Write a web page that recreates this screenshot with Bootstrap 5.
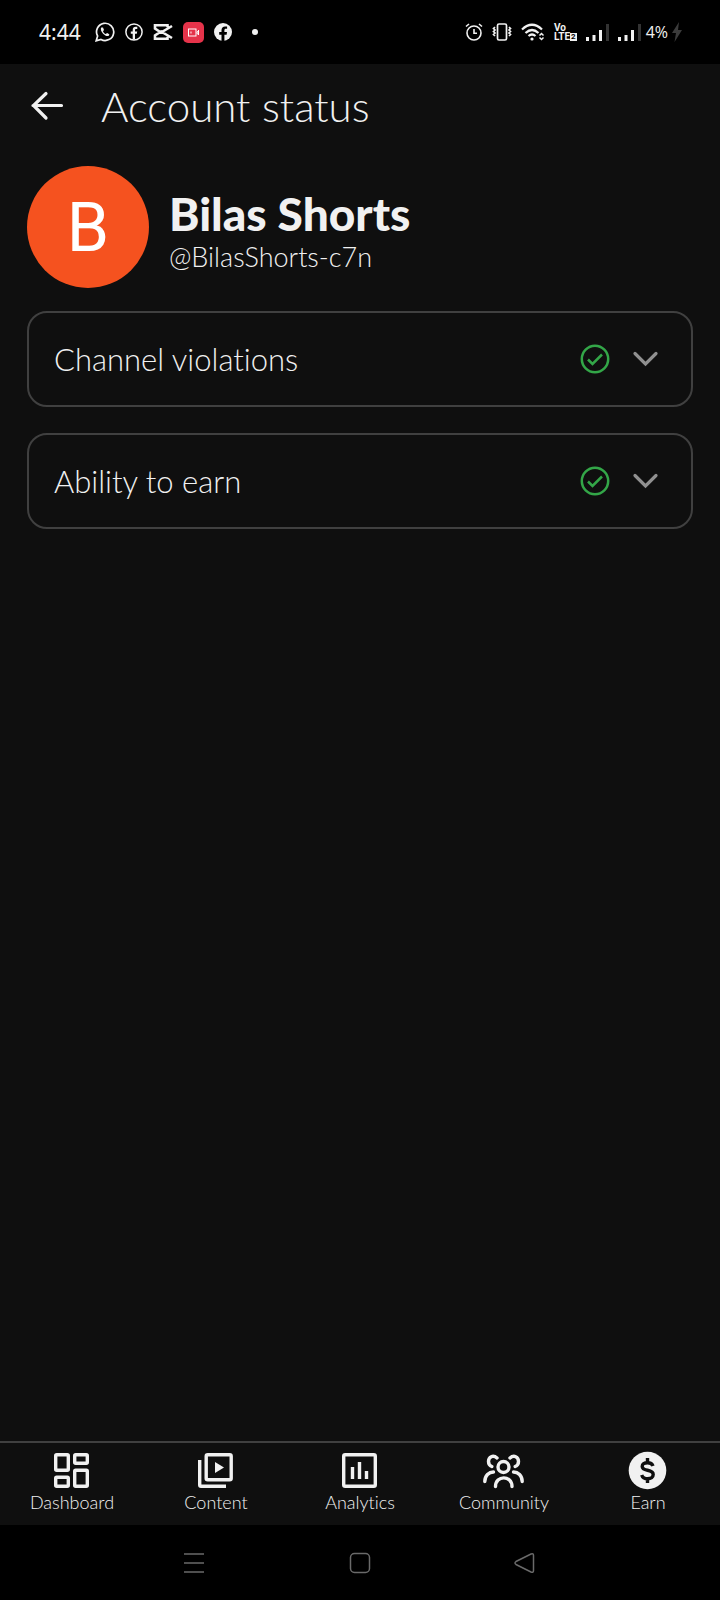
<!DOCTYPE html>
<html lang="en" data-bs-theme="dark">
<head>
<meta charset="utf-8">
<meta name="viewport" content="width=device-width, initial-scale=1">
<title>Account status</title>
<link href="https://cdn.jsdelivr.net/npm/bootstrap@5.3.0/dist/css/bootstrap.min.css" rel="stylesheet">
<style>
  body { background: #0f0f0f; color: #f1f1f1; font-family: Lato, "Open Sans", sans-serif; font-weight: 300; }
  body, button { font-variant-ligatures: none; }
  h1, h2 { color: #f1f1f1; }
  svg { display: block; flex-shrink: 0; }
  .status-bar { height: 64px; padding: 0 38px 0 39px; background: #000; color: #f1f1f1; }
  .status-left { gap: 10px; }
  .status-right { gap: 9px; }
  .clock { font: 400 21px/24px "Noto Sans", sans-serif; margin-right: 4px; }
  .power { gap: 4px; margin-left: -4px; }
  .battery { font: 400 16px/20px "Open Sans", sans-serif; }
  .volte { font: 700 10px/9px Roboto, sans-serif; }
  .sim { background: #f1f1f1; color: #000; font-size: 8px; line-height: 8px; padding: 0 1px; }
  .top-bar { height: 84px; padding: 0 26px; gap: 32px; }
  .top-bar h1 { font-size: 42px; line-height: 48px; font-weight: 300; }
  .avatar { width: 122px; height: 122px; background: #f5521f; color: #fff; font: 400 68px/124px Roboto, sans-serif; }
  .profile { padding: 18px 27px 23px; gap: 20px; }
  .profile-text { padding-top: 11px; }
  .profile h2 { font-size: 46px; line-height: 48px; font-weight: 900; }
  .handle { font-size: 27px; line-height: 38px; }
  .status-list { padding: 0 27px; gap: 26px; }
  .status-row { height: 96px; border: 2px solid #404040; border-radius: 20px; padding: 0 31px 0 25px; gap: 20px; color: #f1f1f1; font-size: 31px; font-weight: 300; }
  .tab-bar { border-top: 2px solid #404040; height: 84px; background: #0f0f0f; }
  .tab-bar a { color: #f1f1f1; font-size: 18px; line-height: 20px; padding-top: 7px; }
  .system-bar { height: 75px; background: #000; gap: 133px; }
  .system-bar button { padding: 5px; color: #6a6a6a; }
</style>
</head>
<body class="d-flex flex-column min-vh-100">
<div class="status-bar d-flex align-items-center justify-content-between">
  <div class="status-left d-flex align-items-center">
    <span class="clock">4:44</span>
    <svg width="20" height="20" viewBox="0 0 20 20"><path d="M1.200 18.800L2.600 14A8.600 8.600 0 1 1 6 17.400z" fill="none" stroke="#f1f1f1" stroke-width="1.700"/><path d="M6.300 5.500c-1.400 2 .8 6 4 7.900 2 1.200 4 .7 4-1.200l-2.200-1.200-1.300 1.100c-1.200-.5-2.300-1.700-2.800-2.900l1-1.200-1-2.400z" fill="#f1f1f1"/></svg>
    <svg width="18" height="18" viewBox="0 0 18 18"><circle cx="9" cy="9" r="8.100" fill="none" stroke="#f1f1f1" stroke-width="1.500"/><path d="M7.700 16.500v-5.700H5.800V8.400h1.900V7c0-2.200 1.200-3.300 3-3.300l1.600.1v2.100h-1.100c-.9 0-1.200.5-1.200 1.200v1.300h2.200l-.4 2.400H10v5.700z" fill="#f1f1f1"/></svg>
    <svg width="20" height="18" viewBox="0 0 20 18" fill="none" stroke="#f1f1f1" stroke-width="2.600"><path d="M19 3L8 9.500 2 5.500V2.300h12.500v2M19 15L8 8.500 2 12.500v3.200h12.500v-2"/></svg>
    <svg width="21" height="21" viewBox="0 0 21 21"><rect width="21" height="21" rx="5" fill="#e5334a"/><g fill="none" stroke="#fff"><rect x="5.500" y="7" width="7.500" height="7"/><path d="M8 9.500v2M15.500 8v5M15.500 9l-1.500 1v1.500l1.500 1"/></g></svg>
    <svg width="18" height="18" viewBox="0 0 18 18"><circle cx="9" cy="9" r="9" fill="#f1f1f1"/><path d="M7.500 18v-6.300H5.200V9h2.300V7.200c0-2.500 1.400-3.800 3.600-3.800l2 .2v2.200H12c-1.200 0-1.600.7-1.600 1.500V9h2.600l-.4 2.700h-2.200V18z" fill="#000"/></svg>
    <svg class="ms-2" width="10" height="10" viewBox="0 0 10 10"><circle cx="5" cy="5" r="3" fill="#f1f1f1"/></svg>
  </div>
  <div class="status-right d-flex align-items-center">
    <svg width="18" height="18" viewBox="0 0 18 18" fill="none" stroke="#f1f1f1" stroke-width="1.600"><circle cx="9" cy="10" r="7"/><path d="M9 6v4.300h3M1 3.500L4 1M17 3.500L14 1"/></svg>
    <svg width="20" height="18" viewBox="0 0 20 18" fill="none" stroke="#f1f1f1" stroke-width="1.700"><rect x="5.500" y="1" width="9" height="16" rx="1.500"/><path d="M3 4L1.500 5.500 3 7 1.500 8.500 3 10 1.500 11.500 3 13M17 4l1.500 1.500L17 7l1.500 1.500L17 10l1.500 1.500L17 13"/></svg>
    <svg width="24" height="18" viewBox="0 0 24 18" fill="none" stroke="#f1f1f1" stroke-width="2.200"><path d="M1 6.500q10-9.500 20 0M4.500 10q6.500-6 13 0M7.500 13q3.500-3 7 0"/><circle cx="11" cy="16" r="1.600" fill="#f1f1f1" stroke="none"/><path d="M18.500 12.500l2-2 2 2M18.500 14.500l2 2 2-2" stroke-width="1.500"/></svg>
    <div class="volte"><div>Vo</div><div class="d-flex align-items-center">LTE<span class="sim">2</span></div></div>
    <svg width="23" height="18" viewBox="0 0 23 18"><path d="M0 14h3v4H0zM6.500 12h3v6h-3zM13 7h3v11h-3z" fill="#f1f1f1"/><path d="M20 1h3v17h-3z" fill="#333"/></svg>
    <svg width="23" height="18" viewBox="0 0 23 18"><path d="M0 14h3v4H0zM6.500 12h3v6h-3zM13 7h3v11h-3z" fill="#f1f1f1"/><path d="M20 1h3v17h-3z" fill="#333"/></svg>
    <div class="power d-flex align-items-center"><span class="battery">4%</span>
    <svg width="10" height="20" viewBox="0 0 10 20"><path d="M7 0L0 11h4L2.500 20 10 8H6z" fill="#3c3c3c"/></svg></div>
  </div>
</div>

<header class="top-bar d-flex align-items-center">
  <button class="btn border-0 p-0" aria-label="Back">
    <svg width="43" height="43" viewBox="0 0 43 43" fill="none" stroke="#f1f1f1" stroke-width="3.200" stroke-linecap="round"><path d="M35.500 20.500H7M20 8.500L7.500 20.500 20 33"/></svg>
  </button>
  <h1 class="m-0">Account status</h1>
</header>

<main class="flex-grow-1">
  <section class="profile d-flex align-items-center">
    <div class="avatar rounded-circle text-center flex-shrink-0">B</div>
    <div class="profile-text">
      <h2 class="m-0">Bilas Shorts</h2>
      <div class="handle">@BilasShorts-c7n</div>
    </div>
  </section>
  <section class="status-list d-flex flex-column">
    <button class="btn status-row d-flex align-items-center text-start w-100">
      <span class="flex-grow-1">Channel violations</span>
      <svg width="30" height="30" viewBox="0 0 30 30" fill="none" stroke="#33a648" stroke-width="2.500"><circle cx="15" cy="15" r="13.200"/><path d="M8 15.500l4.500 4.500L22 10.500"/></svg>
      <svg width="30" height="30" viewBox="0 0 30 30" fill="none" stroke="#909090" stroke-width="3.200" stroke-linecap="round"><path d="M5 9.500l10.500 10.500L26 9.500"/></svg>
    </button>
    <button class="btn status-row d-flex align-items-center text-start w-100">
      <span class="flex-grow-1">Ability to earn</span>
      <svg width="30" height="30" viewBox="0 0 30 30" fill="none" stroke="#33a648" stroke-width="2.500"><circle cx="15" cy="15" r="13.200"/><path d="M8 15.500l4.500 4.500L22 10.500"/></svg>
      <svg width="30" height="30" viewBox="0 0 30 30" fill="none" stroke="#909090" stroke-width="3.200" stroke-linecap="round"><path d="M5 9.500l10.500 10.500L26 9.500"/></svg>
    </button>
  </section>
</main>

<nav class="tab-bar">
  <div class="row g-0 w-100 row-cols-5">
    <a href="#" class="col d-flex flex-column align-items-center text-decoration-none">
      <svg width="42" height="42" viewBox="0 0 42 42" fill="none" stroke="#f1f1f1" stroke-width="3.400"><rect x="4.700" y="4.700" width="12.600" height="15.600" rx="1"/><rect x="23.700" y="4.700" width="12.600" height="8.600" rx="1"/><rect x="4.700" y="27.200" width="12.600" height="9.100" rx="1"/><rect x="23.700" y="20.200" width="12.600" height="16.100" rx="1"/></svg>
      Dashboard</a>
    <a href="#" class="col d-flex flex-column align-items-center text-decoration-none">
      <svg width="42" height="42" viewBox="0 0 42 42" fill="none" stroke="#f1f1f1" stroke-width="3.400"><rect x="11.200" y="4.700" width="25" height="25" rx="1.500"/><path d="M4.700 10v25q0 1.300 1.300 1.300h25"/><path d="M20 12v11l9-5.500z" fill="#f1f1f1" stroke="none"/></svg>
      Content</a>
    <a href="#" class="col d-flex flex-column align-items-center text-decoration-none">
      <svg width="42" height="42" viewBox="0 0 42 42" fill="none" stroke="#f1f1f1" stroke-width="3.400"><rect x="4.700" y="4.700" width="31.600" height="31.600" rx="1.500"/><path d="M13.500 17v12M20.500 12v17M27.500 21v8"/></svg>
      Analytics</a>
    <a href="#" class="col d-flex flex-column align-items-center text-decoration-none">
      <svg width="42" height="42" viewBox="0 0 42 42" fill="none" stroke="#f1f1f1" stroke-width="3.400" stroke-linecap="round"><circle cx="20.500" cy="17" r="5.500"/><path d="M12.500 36.500c0-11.500 16.500-11.500 16.500 0"/><path d="M14 8C10 4.500 5.500 7 5.500 11.500c0 2.500 1.300 4.200 3.300 5M27 8c4-3.500 8.500-1 8.500 3.500 0 2.500-1.300 4.200-3.300 5"/><path d="M1.800 31.500C1.800 25.500 6 22 10.500 22M39.200 31.500C39.200 25.500 35 22 30.500 22"/></svg>
      Community</a>
    <a href="#" class="col d-flex flex-column align-items-center text-decoration-none">
      <svg width="42" height="42" viewBox="0 0 42 42" fill="none" stroke="#0f0f0f" stroke-width="3.400"><circle cx="20.500" cy="20.500" r="18.800" fill="#f1f1f1" stroke="none"/><path d="M26 16c-.8-2.300-2.800-3.300-5.500-3.300-3.200 0-5.300 1.500-5.300 3.800 0 5.500 11 2 11 8 0 2.600-2.300 4.200-5.500 4.200-3 0-5.200-1.300-6-3.800M20.500 8v5M20.500 28.500V33"/></svg>
      Earn</a>
  </div>
</nav>

<footer class="system-bar d-flex align-items-center justify-content-center">
  <button class="btn border-0" aria-label="Recent apps"><svg width="22" height="22" viewBox="0 0 22 22" stroke="currentColor" stroke-width="1.700"><path d="M0 2h20M0 11h20M0 20h20"/></svg></button>
  <button class="btn border-0" aria-label="Home"><svg width="22" height="22" viewBox="0 0 22 22" fill="none" stroke="currentColor" stroke-width="1.500"><rect x="1.500" y="1.500" width="19" height="19" rx="4"/></svg></button>
  <button class="btn border-0" aria-label="Back"><svg width="22" height="22" viewBox="0 0 22 22" fill="none" stroke="currentColor" stroke-width="1.500"><path d="M17 2Q19.500 1 19.500 3.500v15q0 2.500-2.500 1.500L2 12.500Q0 11 2 9.500z"/></svg></button>
</footer>
<script src="https://cdn.jsdelivr.net/npm/bootstrap@5.3.0/dist/js/bootstrap.bundle.min.js"></script>
</body>
</html>
